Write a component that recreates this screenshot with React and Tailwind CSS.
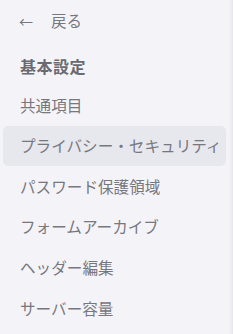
const items = [
    '共通項目',
    'プライバシー・セキュリティ',
    'パスワード保護領域',
    'フォームアーカイブ',
    'ヘッダー編集',
    'サーバー容量',
];

export default function App() {
    const active = 'プライバシー・セキュリティ';

    return (
        <div
            className="w-[233px] h-[334px] bg-[#f4f4f8] flex overflow-hidden"
            style={{ fontFamily: '"Noto Sans CJK JP", "Noto Sans", sans-serif' }}
        >
            <nav className="flex-1 flex flex-col pt-[8px]">
                <button className="flex items-center h-[26px] pl-[19px] text-[15.5px] text-[#77777f] text-left">
                    <span className="w-[32px] text-[14px]">←</span>
                    <span>戻る</span>
                </button>
                <h2 className="h-[38px] mt-[13px] pl-[20px] flex items-center text-[16px] font-bold text-[#6a6a72] tracking-[0.5px]">
                    基本設定
                </h2>
                <ul className="flex flex-col">
                    {items.map((item) => (
                        <li
                            key={item}
                            className={
                                'mx-[3px] h-[40.6px] pl-[17px] flex items-center rounded-[5px] text-[15.6px] text-[#77777e] whitespace-nowrap ' +
                                (item === active ? 'bg-[#e7e7ee]' : '')
                            }
                        >
                            {item}
                        </li>
                    ))}
                </ul>
            </nav>
            <div className="w-[4px] bg-gradient-to-r from-[#f4f4f8] to-[#e6e6ec]" />
        </div>
    );
}
